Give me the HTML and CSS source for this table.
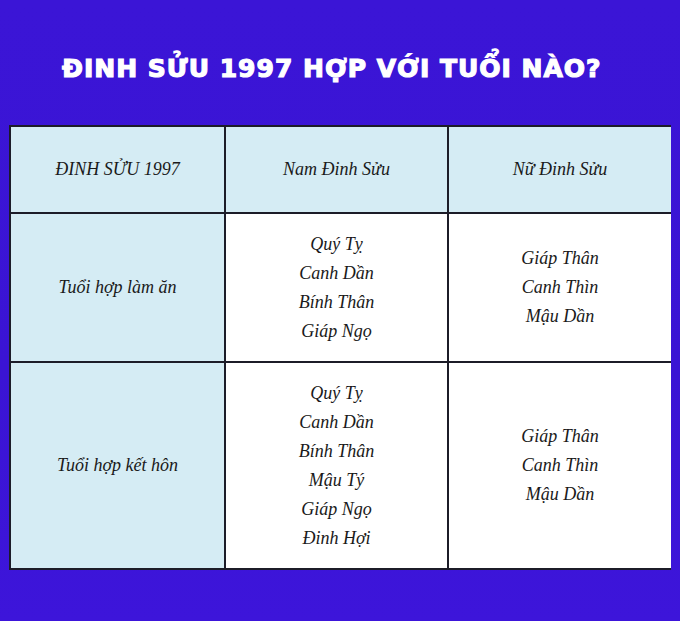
FILE: index.html
```html
<!DOCTYPE html>
<html lang="vi">
<head>
<meta charset="utf-8">
<link rel="stylesheet" href="styles.css">
</head>
<body>
<div class="page">
  <h1 class="title">ĐINH SỬU 1997 HỢP VỚI TUỔI NÀO?</h1>
  <div class="table">
    <div class="cell head">ĐINH SỬU 1997</div>
    <div class="cell head">Nam Đinh Sửu</div>
    <div class="cell head">Nữ Đinh Sửu</div>

    <div class="cell label row1">Tuổi hợp làm ăn</div>
    <div class="cell body row1">
      <span>Quý Tỵ</span><span>Canh Dần</span><span>Bính Thân</span><span>Giáp Ngọ</span>
    </div>
    <div class="cell body row1">
      <span>Giáp Thân</span><span>Canh Thìn</span><span>Mậu Dần</span>
    </div>

    <div class="cell label row2">Tuổi hợp kết hôn</div>
    <div class="cell body row2">
      <span>Quý Tỵ</span><span>Canh Dần</span><span>Bính Thân</span><span>Mậu Tý</span><span>Giáp Ngọ</span><span>Đinh Hợi</span>
    </div>
    <div class="cell body row2">
      <span>Giáp Thân</span><span>Canh Thìn</span><span>Mậu Dần</span>
    </div>
  </div>
</div>
</body>
</html>
```
FILE: styles.css
```css
html, body {
  margin: 0;
  padding: 0;
}
body {
  width: 680px;
  height: 621px;
  background: linear-gradient(180deg, #3b15d6 0%, #3a14d4 60%, #3d15da 100%);
  overflow: hidden;
}
.page {
  padding: 0 0 0 9px;
}
.title {
  margin: 0;
  padding: 52px 0 0 53px;
  height: 73px;
  box-sizing: border-box;
  font-family: "DejaVu Sans", sans-serif;
  font-weight: 700;
  font-size: 25px;
  line-height: 34px;
  letter-spacing: 1px;
  color: #ffffff;
  -webkit-text-stroke: 1.2px #ffffff;
  white-space: nowrap;
}
.table {
  margin-top: 52px;
  width: 662px;
  box-sizing: border-box;
  display: grid;
  grid-template-columns: 213px 221px 222px;
  grid-template-rows: 85px 147px 205px;
  gap: 2px;
  padding: 2px;
  background: #1c1c28;
}
.cell {
  display: flex;
  flex-direction: column;
  align-items: center;
  justify-content: center;
  font-family: "Liberation Serif", "DejaVu Serif", serif;
  font-style: italic;
  font-size: 18px;
  color: #1a1a1a;
}
.head, .label {
  background: #d5ecf4;
}
.body {
  background: #ffffff;
}
.body span {
  line-height: 29px;
}
```
